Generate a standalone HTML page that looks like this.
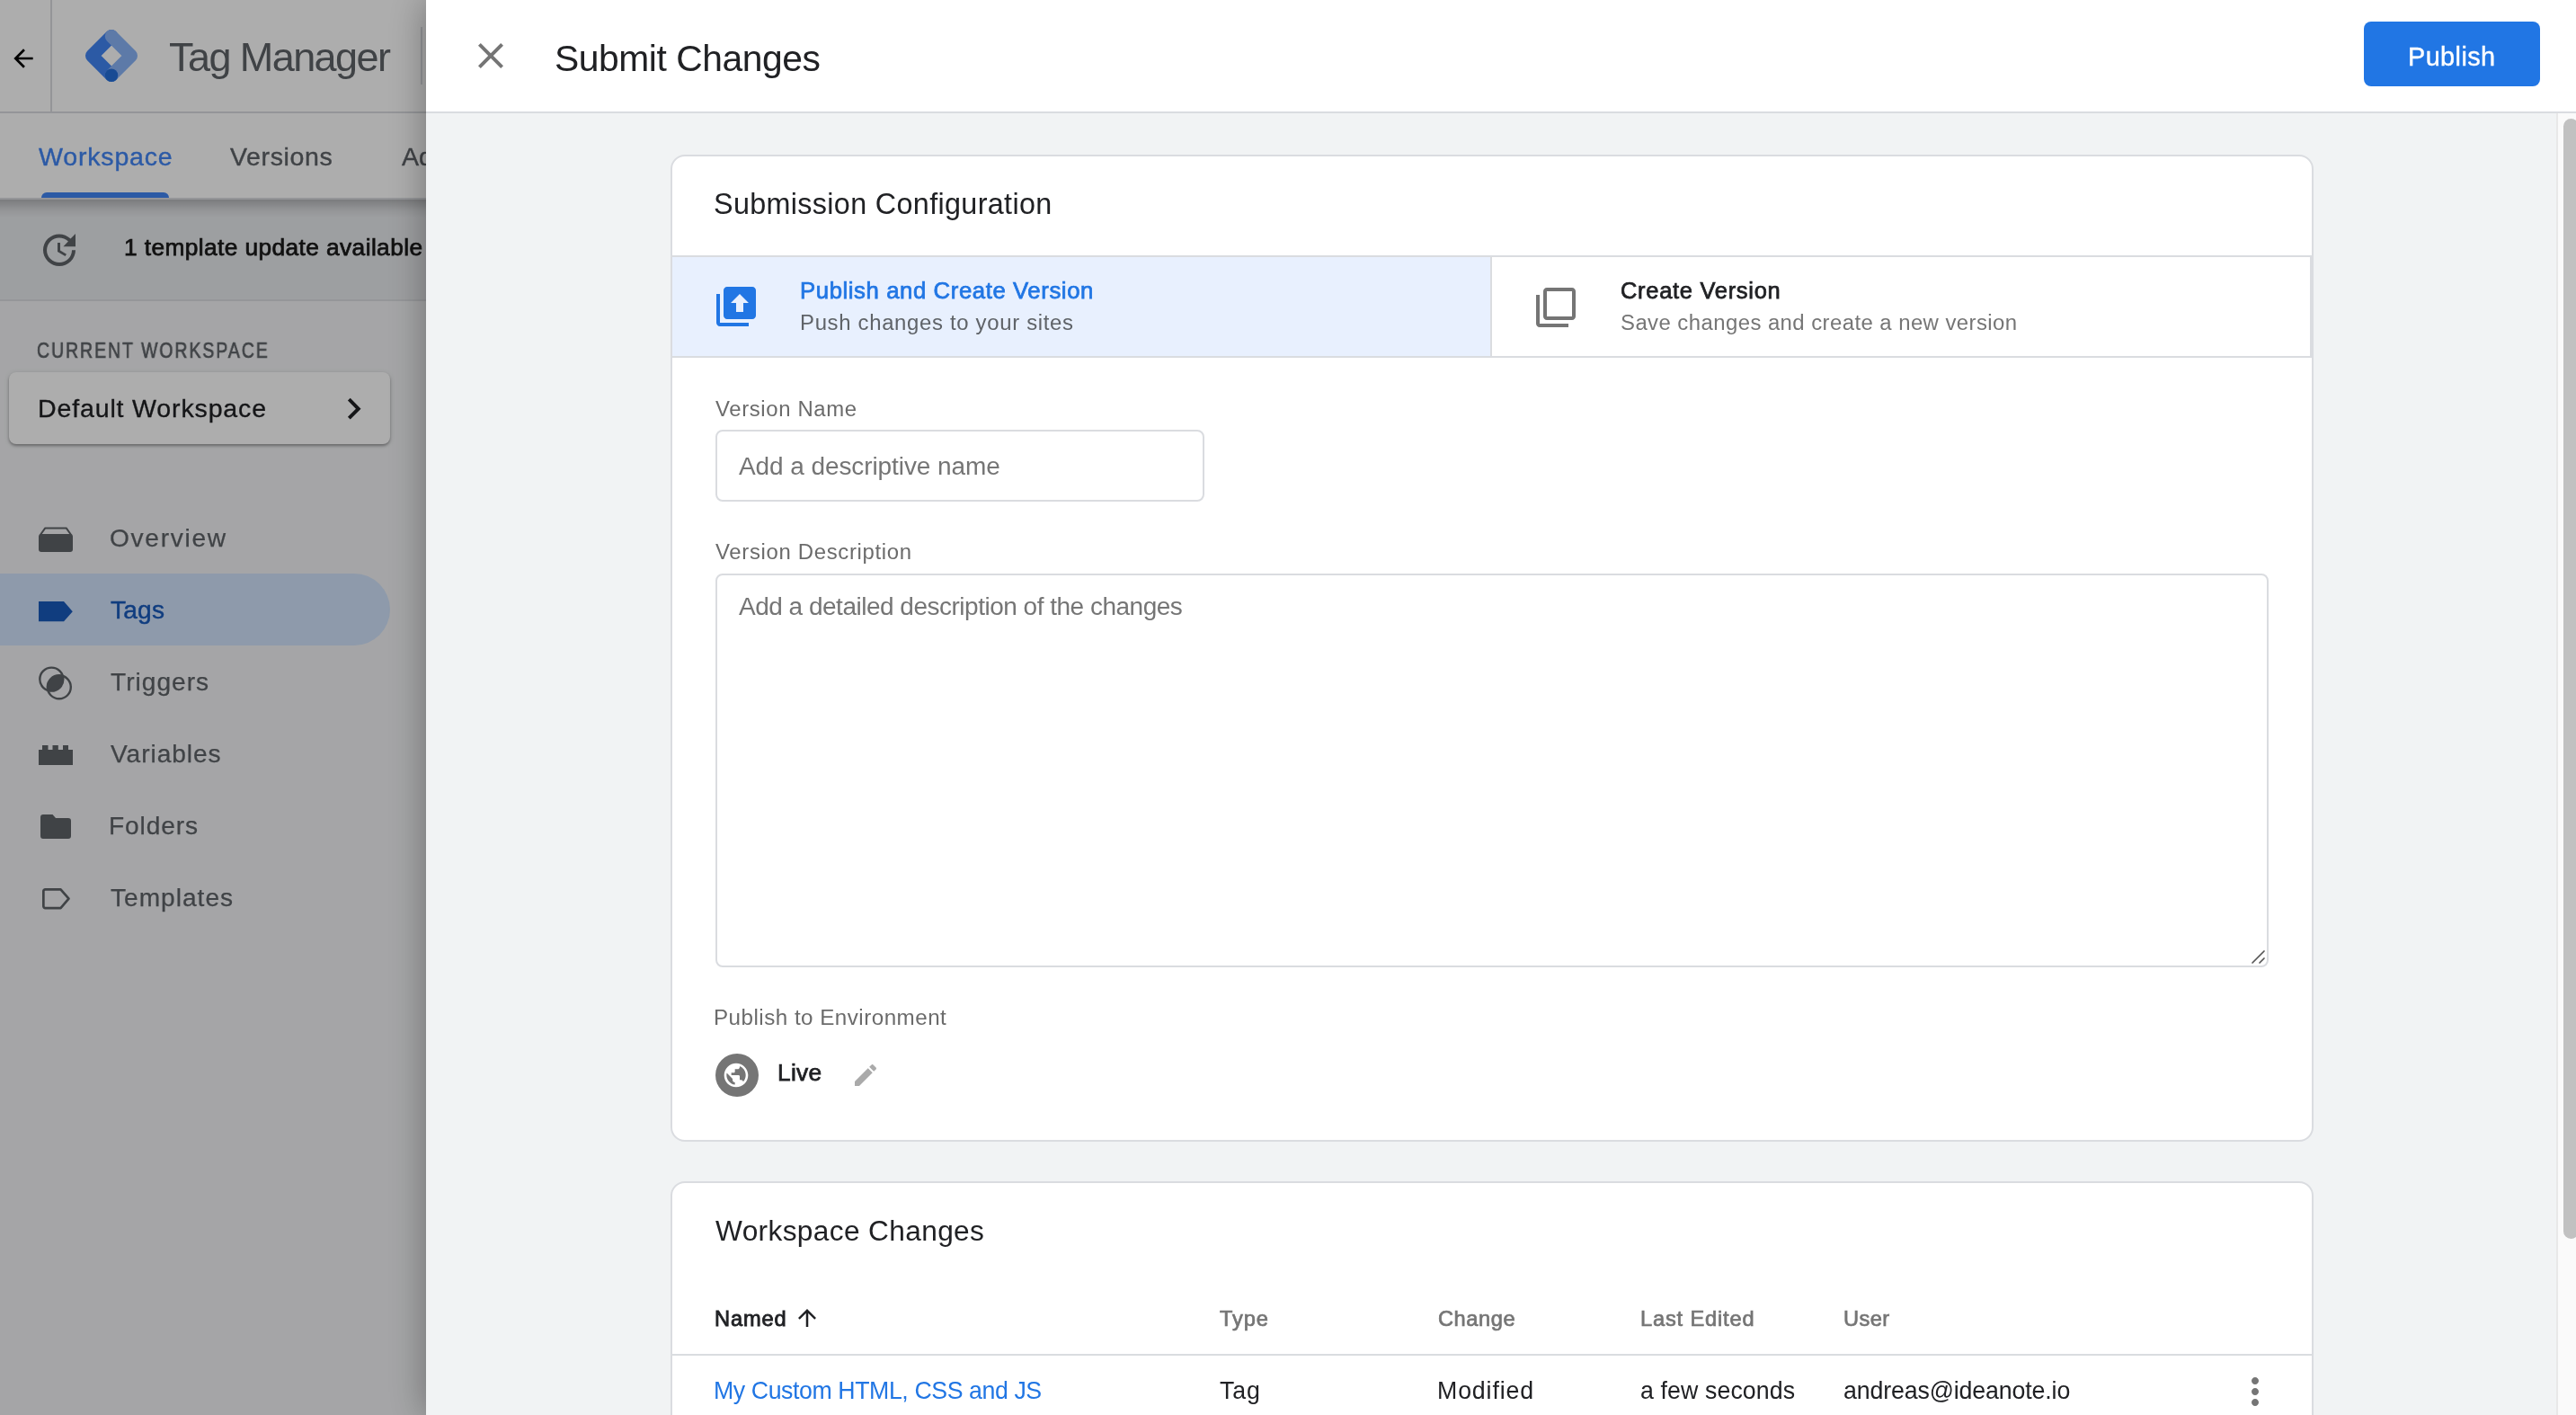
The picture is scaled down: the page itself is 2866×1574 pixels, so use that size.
<!DOCTYPE html>
<html><head><meta charset="utf-8">
<style>
html,body{margin:0;padding:0;}
body{width:2866px;height:1574px;overflow:hidden;position:relative;font-family:"Liberation Sans",sans-serif;background:#a5a6a8;}
.t{position:absolute;white-space:nowrap;line-height:1;will-change:transform;}
.card{position:absolute;background:#fff;border:2px solid #dadce0;border-radius:16px;}
#left{position:absolute;left:0;top:0;width:474px;height:1574px;overflow:hidden;}
#scrim{position:absolute;left:0;top:0;width:474px;height:1574px;background:rgba(0,0,0,0.32);}
#panel{position:absolute;left:474px;top:0;width:2392px;height:1574px;background:#f1f3f4;box-shadow:0 0 40px rgba(0,0,0,0.35);overflow:hidden;}
</style></head><body>
<div id="left">
<div style="position:absolute;left:0;top:0;width:1000px;height:124px;background:#fff;border-bottom:2px solid #dadce0"></div>
<div style="position:absolute;left:56px;top:0;width:2px;height:124px;background:#dadce0"></div>
<svg style="position:absolute;left:10.3px;top:48.7px" width="32" height="32" viewBox="0 0 24 24"><path fill="#000" d="M20 11H7.83l5.59-5.59L12 4l-8 8 8 8 1.41-1.41L7.83 13H20v-2z"/></svg>
<svg style="position:absolute;left:94px;top:32px" width="60" height="60" viewBox="0 0 60 60">
<g transform="translate(30,30)" fill="none" stroke-width="14.5" stroke-linecap="round" stroke-linejoin="round">
<path d="M0 -21.75 L-21.75 0 L0 21.75" stroke="#4285f4"/>
<path d="M0 -21.75 L21.75 0 L0 21.75" stroke="#8ab4f8"/>
<circle cx="0" cy="21.75" r="7.25" fill="#246fdb" stroke="none"/>
</g></svg>
<div class="t" style="left:188.00px;top:40.79px;font-size:45.01px;color:#5f6368;letter-spacing:-1.57px;">Tag Manager</div>
<div style="position:absolute;left:468px;top:30px;width:2px;height:64px;background:#dadce0"></div>
<div style="position:absolute;left:0;top:126px;width:1000px;height:94px;background:#fff;border-bottom:2px solid #dadce0"></div>
<div class="t" style="left:42.50px;top:160.33px;font-size:28.55px;color:#4285f4;letter-spacing:0.81px;-webkit-text-stroke:0.4px #4285f4;">Workspace</div>
<div class="t" style="left:256.00px;top:160.33px;font-size:28.55px;color:#5f6368;letter-spacing:0.61px;-webkit-text-stroke:0.4px #5f6368;">Versions</div>
<div class="t" style="left:447.00px;top:160.33px;font-size:28.55px;color:#5f6368;-webkit-text-stroke:0.4px #5f6368;">Admin</div>
<div style="position:absolute;left:46px;top:214px;width:142px;height:6px;background:#4285f4;border-radius:6px 6px 0 0"></div>
<div style="position:absolute;left:0;top:222px;width:1000px;height:111px;background:#e8eaed;border-bottom:2px solid #dcdee2"></div>
<div style="position:absolute;left:0;top:222px;width:1000px;height:20px;background:linear-gradient(rgba(0,0,0,0.22),rgba(0,0,0,0.06) 60%,rgba(0,0,0,0))"></div>
<svg style="position:absolute;left:42px;top:254px" width="48" height="48" viewBox="0 0 24 24"><path fill="#5f6368" d="M21 10.12h-6.78l2.74-2.82c-2.73-2.7-7.15-2.8-9.88-.1-2.73 2.71-2.73 7.08 0 9.79s7.15 2.71 9.88 0C18.32 15.65 19 14.08 19 12.1h2c0 1.98-.88 4.55-2.64 6.29-3.51 3.48-9.21 3.48-12.72 0-3.5-3.47-3.53-9.11-.02-12.58s9.14-3.470 12.65 0L21 3v7.12zM12.5 8v4.25l3.5 2.08-.72 1.21L11 13V8h1.5z"/></svg>
<div class="t" style="left:137.50px;top:262.43px;font-size:26.30px;color:#1a1a1a;letter-spacing:0.40px;-webkit-text-stroke:0.75px #1a1a1a;">1 template update available</div>
<div style="position:absolute;left:0;top:335px;width:1000px;height:1300px;background:#f3f4f6"></div>
<div class="t" style="left:41.00px;top:379.33px;font-size:23.35px;color:#5f6368;letter-spacing:2.40px;-webkit-text-stroke:0.7px #5f6368;transform:scaleX(0.8322);transform-origin:0.00px 0;">CURRENT WORKSPACE</div>
<div style="position:absolute;left:10px;top:414px;width:424px;height:80px;background:#fff;border-radius:8px;box-shadow:0 2px 3px rgba(0,0,0,0.3),0 1px 6px rgba(0,0,0,0.12)"></div>
<div class="t" style="left:41.50px;top:440.33px;font-size:28.55px;color:#202124;letter-spacing:0.84px;-webkit-text-stroke:0.3px #202124;">Default Workspace</div>
<svg style="position:absolute;left:369.8px;top:430.6px" width="47.3" height="47.3" viewBox="0 0 24 24"><path fill="#202124" d="M10 6L8.59 7.41 13.17 12l-4.58 4.59L10 18l6-6z"/></svg>
<div style="position:absolute;left:-40px;top:638px;width:474px;height:80px;background:#d2e3fc;border-radius:40px"></div>
<div class="t" style="left:122.00px;top:584.68px;font-size:28.13px;color:#5f6368;letter-spacing:1.69px;-webkit-text-stroke:0.25px #5f6368;">Overview</div>
<div class="t" style="left:123.00px;top:664.68px;font-size:28.13px;color:#185abc;letter-spacing:0.20px;-webkit-text-stroke:0.45px #185abc;">Tags</div>
<div class="t" style="left:123.00px;top:744.68px;font-size:28.13px;color:#5f6368;letter-spacing:1.00px;-webkit-text-stroke:0.25px #5f6368;">Triggers</div>
<div class="t" style="left:123.00px;top:824.68px;font-size:28.13px;color:#5f6368;letter-spacing:0.93px;-webkit-text-stroke:0.25px #5f6368;">Variables</div>
<div class="t" style="left:121.00px;top:904.68px;font-size:28.13px;color:#5f6368;letter-spacing:0.88px;-webkit-text-stroke:0.25px #5f6368;">Folders</div>
<div class="t" style="left:123.00px;top:984.68px;font-size:28.13px;color:#5f6368;letter-spacing:0.99px;-webkit-text-stroke:0.25px #5f6368;">Templates</div>
<svg style="position:absolute;left:43px;top:586px" width="38" height="29" viewBox="0 0 38 29"><rect x="0" y="8" width="38" height="20" rx="3" fill="#5f6368"/><path fill="none" stroke="#5f6368" stroke-width="2" stroke-linejoin="round" d="M1.5 9.5L7.3 1.4H30.7L36.5 9.5"/></svg>
<svg style="position:absolute;left:43px;top:669px" width="38" height="23" viewBox="0 0 38 23"><path fill="#185abc" d="M0 0H28L37.8 11.2L28 22.3H0z"/></svg>
<svg style="position:absolute;left:42px;top:741px" width="40" height="40" viewBox="0 0 40 40"><defs><clipPath id="c1"><circle cx="15.3" cy="14.6" r="13"/></clipPath></defs><circle cx="23.8" cy="23.3" r="13" fill="#5f6368" clip-path="url(#c1)"/><circle cx="15.3" cy="14.6" r="13" fill="none" stroke="#5f6368" stroke-width="2.4"/><circle cx="23.8" cy="23.3" r="13" fill="none" stroke="#5f6368" stroke-width="2.4"/></svg>
<svg style="position:absolute;left:43px;top:829px" width="38" height="22" viewBox="0 0 38 22"><path fill="#5f6368" d="M0 5h4V0h6.5v5h5V0h6.3v5h5.2V0h6v5h5v17H0z"/></svg>
<svg style="position:absolute;left:45px;top:906px" width="34" height="27" viewBox="0 0 34 27"><path fill="#5f6368" d="M3 0H13.5L17 4H31a3 3 0 0 1 3 3V24a3 3 0 0 1-3 3H3a3 3 0 0 1-3-3V3a3 3 0 0 1 3-3z"/></svg>
<svg style="position:absolute;left:47px;top:988px" width="32" height="24" viewBox="0 0 32 24"><path fill="none" stroke="#5f6368" stroke-width="2.7" stroke-linejoin="round" d="M3.35 1.35H20.5L29.5 11.7L20.5 22.05H3.35A2 2 0 0 1 1.35 20.05V3.35A2 2 0 0 1 3.35 1.35Z"/></svg>
</div>
<div id="scrim"></div>
<div id="panel">
<div style="position:absolute;left:0;top:0;width:2392px;height:124px;background:#fff;border-bottom:2px solid #dadce0"></div>
<svg style="position:absolute;left:48px;top:38px" width="48" height="48" viewBox="0 0 24 24"><path fill="#757575" d="M19 6.41L17.59 5 12 10.59 6.41 5 5 6.41 10.59 12 5 17.59 6.41 19 12 13.41 17.59 19 19 17.59 13.41 12z"/></svg>
<div class="t" style="left:143.00px;top:44.97px;font-size:40.79px;color:#202124;letter-spacing:-0.43px;">Submit Changes</div>
<div style="position:absolute;left:2156px;top:24px;width:196px;height:72px;background:#2176e4;border-radius:8px"></div>
<div class="t" style="left:2204.50px;top:48.59px;font-size:28.83px;color:#fff;letter-spacing:0.42px;-webkit-text-stroke:0.4px #fff;">Publish</div>
<div style="position:absolute;left:2370px;top:126px;width:22px;height:1448px;background:#fafafa;border-left:2px solid #e8e8e8"></div>
<div style="position:absolute;left:2378px;top:132px;width:17px;height:1246px;background:#c1c1c1;border-radius:8.5px"></div>
<div class="card" style="left:272px;top:172px;width:1824px;height:1094px"></div>
<div class="t" style="left:320.00px;top:211.21px;font-size:32.35px;color:#202124;letter-spacing:0.34px;">Submission Configuration</div>
<div style="position:absolute;left:274px;top:284px;width:1824px;height:2px;background:#dadce0"></div>
<div style="position:absolute;left:274px;top:286px;width:910px;height:110px;background:#e8f0fe"></div>
<div style="position:absolute;left:1184px;top:286px;width:2px;height:110px;background:#dadce0"></div>
<div style="position:absolute;left:2096px;top:286px;width:2px;height:110px;background:#dadce0"></div>
<div style="position:absolute;left:274px;top:396px;width:1824px;height:2px;background:#dadce0"></div>
<svg style="position:absolute;left:321px;top:317px" width="48" height="48" viewBox="0 0 24 24"><path fill="#2176e4" d="M3 5H1v16c0 1.1.9 2 2 2h16v-2H3V5zm18-4H7c-1.1 0-2 .9-2 2v14c0 1.1.9 2 2 2h14c1.1 0 2-.9 2-2V3c0-1.1-.9-2-2-2z"/><path fill="#e8f0fe" d="M14 5L9 10H12V15H16V10H19z"/></svg>
<div class="t" style="left:415.50px;top:310.91px;font-size:25.74px;color:#2176e4;letter-spacing:0.58px;-webkit-text-stroke:0.75px #2176e4;">Publish and Create Version</div>
<div class="t" style="left:415.50px;top:346.76px;font-size:23.91px;color:#5f6368;letter-spacing:0.68px;">Push changes to your sites</div>
<svg style="position:absolute;left:1233px;top:318px" width="48" height="48" viewBox="0 0 24 24"><path fill="#757575" d="M3 5H1v16c0 1.1.9 2 2 2h16v-2H3V5zm18-4H7c-1.1 0-2 .9-2 2v14c0 1.1.9 2 2 2h14c1.1 0 2-.9 2-2V3c0-1.1-.9-2-2-2zm0 16H7V3h14v14z"/></svg>
<div class="t" style="left:1329.00px;top:311.15px;font-size:25.46px;color:#202124;letter-spacing:0.72px;-webkit-text-stroke:0.75px #202124;">Create Version</div>
<div class="t" style="left:1329.00px;top:346.76px;font-size:23.91px;color:#757575;letter-spacing:0.44px;">Save changes and create a new version</div>
<div class="t" style="left:322.00px;top:442.96px;font-size:23.91px;color:#6b6b6b;letter-spacing:0.63px;">Version Name</div>
<div style="position:absolute;left:322px;top:478px;width:540px;height:76px;border:2px solid #dadce0;border-radius:8px;background:#fff"></div>
<div class="t" style="left:348.00px;top:504.80px;font-size:27.99px;color:#757575;letter-spacing:-0.08px;">Add a descriptive name</div>
<div class="t" style="left:322.00px;top:602.26px;font-size:23.91px;color:#6b6b6b;letter-spacing:0.67px;">Version Description</div>
<div style="position:absolute;left:322px;top:638px;width:1724px;height:434px;border:2px solid #dadce0;border-radius:8px;background:#fff"></div>
<svg style="position:absolute;left:2029px;top:1055px" width="18" height="18" viewBox="0 0 18 18"><path stroke="#555" stroke-width="1.7" stroke-linecap="round" d="M3 16L16 3M11 16L16 11"/></svg>
<div class="t" style="left:348.00px;top:660.80px;font-size:27.99px;color:#757575;letter-spacing:-0.49px;">Add a detailed description of the changes</div>
<div class="t" style="left:320.00px;top:1120.42px;font-size:24.19px;color:#6b6b6b;letter-spacing:0.48px;">Publish to Environment</div>
<div style="position:absolute;left:322px;top:1172px;width:48px;height:48px;border-radius:50%;background:#757575"></div>
<svg style="position:absolute;left:329px;top:1180px" width="32" height="32" viewBox="0 0 24 24"><path fill="#fff" d="M12 2C6.48 2 2 6.48 2 12s4.48 10 10 10 10-4.48 10-10S17.52 2 12 2zm-1 17.930c-3.95-.49-7-3.85-7-7.93 0-.62.08-1.21.21-1.79L9 15v1c0 1.1.9 2 2 2v1.93zm6.9-2.54c-.26-.81-1-1.39-1.9-1.39h-1v-3c0-.55-.45-1-1-1H8v-2h2c.55 0 1-.45 1-1V7h2c1.1 0 2-.9 2-2v-.41c2.93 1.19 5 4.06 5 7.41 0 2.08-.8 3.97-2.1 5.39z"/></svg>
<div class="t" style="left:391.00px;top:1180.23px;font-size:26.30px;color:#202124;letter-spacing:0.27px;-webkit-text-stroke:0.75px #202124;">Live</div>
<svg style="position:absolute;left:473px;top:1180px" width="32" height="32" viewBox="0 0 24 24"><path fill="#aaa" d="M3 17.25V21h3.75L17.81 9.94l-3.75-3.75L3 17.25zM20.71 7.04c.39-.39.39-1.02 0-1.41l-2.34-2.34c-.39-.39-1.02-.39-1.41 0l-1.83 1.830 3.75 3.75 1.83-1.83z"/></svg>
<div class="card" style="left:272px;top:1314px;width:1824px;height:600px"></div>
<div class="t" style="left:322.00px;top:1353.71px;font-size:31.65px;color:#202124;letter-spacing:0.36px;">Workspace Changes</div>
<div class="t" style="left:321.00px;top:1456.49px;font-size:23.63px;color:#202124;letter-spacing:0.85px;-webkit-text-stroke:0.85px #202124;">Named</div>
<svg style="position:absolute;left:409px;top:1451px" width="30" height="30" viewBox="0 0 24 24"><path fill="#202124" d="M4 12l1.41 1.41L11 7.83V20h2V7.83l5.58 5.59L20 12l-8-8-8 8z"/></svg>
<div class="t" style="left:882.50px;top:1456.49px;font-size:23.63px;color:#757575;letter-spacing:0.93px;-webkit-text-stroke:0.7px #757575;">Type</div>
<div class="t" style="left:1125.50px;top:1456.49px;font-size:23.63px;color:#757575;letter-spacing:0.56px;-webkit-text-stroke:0.7px #757575;">Change</div>
<div class="t" style="left:1351.00px;top:1456.49px;font-size:23.63px;color:#757575;letter-spacing:0.84px;-webkit-text-stroke:0.7px #757575;">Last Edited</div>
<div class="t" style="left:1576.50px;top:1456.49px;font-size:23.63px;color:#757575;letter-spacing:0.40px;-webkit-text-stroke:0.7px #757575;">User</div>
<div style="position:absolute;left:274px;top:1506px;width:1824px;height:2px;background:#dadce0"></div>
<div class="t" style="left:320.00px;top:1533.87px;font-size:26.72px;color:#2176e4;letter-spacing:-0.42px;">My Custom HTML, CSS and JS</div>
<div class="t" style="left:882.50px;top:1533.87px;font-size:26.72px;color:#202124;letter-spacing:0.95px;">Tag</div>
<div class="t" style="left:1124.50px;top:1533.87px;font-size:26.72px;color:#202124;letter-spacing:0.87px;">Modified</div>
<div class="t" style="left:1351.00px;top:1533.87px;font-size:26.72px;color:#202124;letter-spacing:0.11px;">a few seconds</div>
<div class="t" style="left:1576.50px;top:1533.87px;font-size:26.72px;color:#202124;letter-spacing:-0.12px;">andreas@ideanote.io</div>
<svg style="position:absolute;left:2011px;top:1524px" width="48" height="48" viewBox="0 0 24 24"><path fill="#757575" d="M12 8c1.1 0 2-.9 2-2s-.9-2-2-2-2 .9-2 2 .9 2 2 2zm0 2c-1.1 0-2 .9-2 2s.9 2 2 2 2-.9 2-2-.9-2-2-2zm0 6c-1.1 0-2 .9-2 2s.9 2 2 2 2-.9 2-2-.9-2-2-2z"/></svg>
</div>
</body></html>
